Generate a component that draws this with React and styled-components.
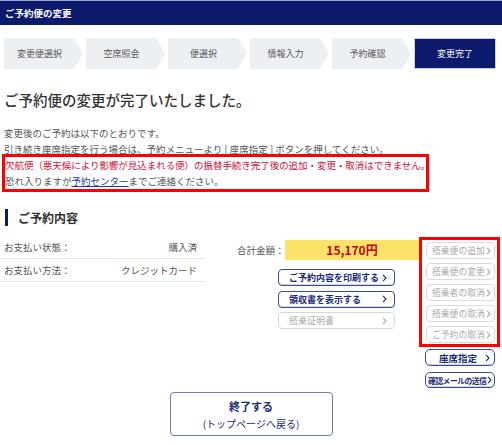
import styled, { createGlobalStyle } from 'styled-components';

const GlobalStyle = createGlobalStyle`
  html, body {
    margin: 0;
    padding: 0;
    background: #fff;
  }
  body {
    font-family: 'Noto Sans CJK JP', 'Noto Sans', sans-serif;
    color: #444;
    width: 502px;
  }
`;

const NAVY = '#0b1a6c';

const steps = ['変更便選択', '空席照会', '便選択', '情報入力', '予約確認', '変更完了'];

const sideButtons = ['搭乗便の追加', '搭乗便の変更', '搭乗者の取消', '搭乗便の取消', 'ご予約の取消'];

export default function App() {
  return (
    <Page>
      <GlobalStyle />
      <Header>ご予約便の変更</Header>

      <StepBar>
        {steps.map((s, i) => (
          <Step key={s} $last={i === steps.length - 1}>
            {s}
          </Step>
        ))}
      </StepBar>

      <Title>ご予約便の変更が完了いたしました。</Title>

      <Notes>
        <p>変更後のご予約は以下のとおりです。</p>
        <p>引き続き座席指定を行う場合は、予約メニューより [ 座席指定 ] ボタンを押してください。</p>
        <Warning>
          <p className="red">
            欠航便（悪天候により影響が見込まれる便）の振替手続き完了後の追加・変更・取消はできません。
          </p>
          <p>
            恐れ入りますが<a href="#center">予約センター</a>までご連絡ください。
          </p>
        </Warning>
      </Notes>

      <SectionTitle>ご予約内容</SectionTitle>

      <Summary>
        <InfoTable>
          <InfoRow>
            <span>お支払い状態：</span>
            <span>購入済</span>
          </InfoRow>
          <InfoRow>
            <span>お支払い方法：</span>
            <span>クレジットカード</span>
          </InfoRow>
        </InfoTable>

        <Middle>
          <TotalRow>
            <TotalLabel>合計金額：</TotalLabel>
            <TotalValue>15,170円</TotalValue>
          </TotalRow>
          <ActionList>
            <ActionButton>ご予約内容を印刷する<Chevron /></ActionButton>
            <ActionButton>領収書を表示する<Chevron /></ActionButton>
            <ActionButton $disabled>搭乗証明書<Chevron /></ActionButton>
          </ActionList>
        </Middle>

        <Side>
          <RedFrame>
            {sideButtons.map((b) => (
              <SideButton key={b}>
                {b}
                <Chevron />
              </SideButton>
            ))}
          </RedFrame>
          <StrongButton>座席指定<Chevron /></StrongButton>
          <StrongButton $small>確認メールの送信<Chevron /></StrongButton>
        </Side>
      </Summary>

      <FinishWrap>
        <FinishButton>
          <strong>終了する</strong>
          <span>(トップページへ戻る)</span>
        </FinishButton>
      </FinishWrap>
    </Page>
  );
}

function Chevron() {
  return (
    <ChevronIcon viewBox="0 0 6 10" aria-hidden="true">
      <path d="M1.2 1.2l3.6 3.8-3.6 3.8" fill="none" stroke="currentColor" strokeWidth="1.4" />
    </ChevronIcon>
  );
}

const Page = styled.div`
  width: 502px;
  padding-bottom: 8px;
`;

const Header = styled.div`
  height: 25px;
  background: ${NAVY};
  border-top: 1px solid #9aa3c8;
  box-sizing: border-box;
  color: #fff;
  font-weight: 700;
  font-size: 9.5px;
  line-height: 24px;
  padding-left: 5px;
`;

const StepBar = styled.div`
  display: flex;
  gap: 2px;
  margin: 13px 0 0 4px;
`;

const Step = styled.div`
  width: ${(p) => (p.$last ? '82px' : '80px')};
  height: 31px;
  box-sizing: border-box;
  display: flex;
  align-items: center;
  justify-content: center;
  font-size: 9px;
  padding-right: ${(p) => (p.$last ? '0' : '9px')};
  background: ${(p) => (p.$last ? NAVY : '#edf0f3')};
  color: ${(p) => (p.$last ? '#fff' : '#555')};
  clip-path: ${(p) =>
    p.$last ? 'none' : 'polygon(0 0, 70px 0, 79px 50%, 70px 100%, 0 100%)'};
  border: ${(p) => (p.$last ? '1px solid #c8cde0' : 'none')};
`;

const Title = styled.h1`
  margin: 21px 0 0 4px;
  font-size: 14.5px;
  font-weight: 500;
  color: #333;
  line-height: 20px;
`;

const Notes = styled.div`
  margin-top: 15px;
  font-size: 9.5px;
  line-height: 16px;
  color: #555;

  p {
    margin: 0 0 0 4px;
    white-space: nowrap;
  }
`;

const Warning = styled.div`
  width: 427px;
  margin: -3px 0 0 2px;
  border: 3px solid #f00;
  box-sizing: border-box;

  p {
    margin-left: 0;
  }

  .red {
    color: #d0103a;
    letter-spacing: -0.04px;
  }

  a {
    color: #1b3b9b;
    text-decoration: underline;
  }
`;

const SectionTitle = styled.h2`
  margin: 17px 0 0 5px;
  padding-left: 10px;
  border-left: 3px solid ${NAVY};
  font-size: 12px;
  font-weight: 700;
  color: #333;
  line-height: 17px;
`;

const Summary = styled.div`
  display: flex;
  margin-top: 10px;
  align-items: flex-start;
`;

const InfoTable = styled.div`
  width: 205px;
  font-size: 9.5px;
  color: #555;
`;

const InfoRow = styled.div`
  display: flex;
  justify-content: space-between;
  height: 22px;
  align-items: center;
  padding: 0 8px 0 4px;
  border-bottom: 1px solid #dce6f2;
`;

const Middle = styled.div`
  width: 182px;
  margin-left: 32px;
  padding-top: 4px;
`;

const TotalRow = styled.div`
  display: flex;
  align-items: center;
`;

const TotalLabel = styled.span`
  width: 48px;
  font-size: 9.5px;
  color: #555;
`;

const TotalValue = styled.span`
  flex: 1;
  height: 20px;
  background: #fde26a;
  color: #c8001a;
  font-weight: 700;
  font-size: 12px;
  line-height: 20px;
  text-align: center;
`;

const ActionList = styled.div`
  display: flex;
  flex-direction: column;
  gap: 4.5px;
  margin: 9px 0 0 41px;
  width: 117px;
`;

const ActionButton = styled.div`
  height: 17px;
  box-sizing: border-box;
  border: 1px solid ${(p) => (p.$disabled ? '#d6d6d6' : '#3b4a96')};
  border-radius: 4px;
  display: flex;
  align-items: center;
  justify-content: space-between;
  padding: 0 7px 0 10px;
  font-size: 9px;
  font-weight: ${(p) => (p.$disabled ? 400 : 700)};
  color: ${(p) => (p.$disabled ? '#aaa' : '#1b2a7a')};
  box-shadow: ${(p) => (p.$disabled ? 'none' : 'inset 0 -1px 0 #cfd5ea')};
`;

const Side = styled.div`
  width: 81px;
  display: flex;
  flex-direction: column;
  align-items: flex-end;
`;

const RedFrame = styled.div`
  align-self: stretch;
  border: 3px solid #f00;
  box-sizing: border-box;
  padding: 2px 2px 1px 4px;
  display: flex;
  flex-direction: column;
  gap: 4px;
  margin-top: 1px;
`;

const SideButton = styled.div`
  height: 17px;
  box-sizing: border-box;
  border-radius: 4px;
  display: flex;
  align-items: center;
  justify-content: space-between;
  white-space: nowrap;
  font-size: 8.8px;
  border: 1px solid #dcdcdc;
  color: #aaa;
  padding: 0 3px 0 5px;
`;

const StrongButton = styled.div`
  width: 70px;
  height: ${(p) => (p.$small ? '16px' : '17px')};
  margin: ${(p) => (p.$small ? '6px 5px 0 0' : '2px 5px 0 0')};
  box-sizing: border-box;
  border-radius: 5px;
  display: flex;
  align-items: center;
  justify-content: space-between;
  white-space: nowrap;
  font-size: ${(p) => (p.$small ? '7.8px' : '9.5px')};
  font-weight: 700;
  letter-spacing: ${(p) => (p.$small ? '-0.5px' : '0')};
  border: 1px solid #3b4a96;
  color: #1b2a7a;
  padding: ${(p) => (p.$small ? '0 2px 0 2px' : '0 4px 0 13px')};
  box-shadow: inset 0 -1px 0 #cfd5ea;
`;

const ChevronIcon = styled.svg`
  width: 5px;
  height: 8px;
  flex-shrink: 0;
`;

const FinishWrap = styled.div`
  display: flex;
  justify-content: center;
  margin-top: 4px;
`;

const FinishButton = styled.div`
  width: 163px;
  height: 44px;
  box-sizing: border-box;
  border: 1px solid #6f7cb8;
  border-radius: 4px;
  display: flex;
  flex-direction: column;
  align-items: center;
  justify-content: center;
  gap: 2px;
  color: #1b2a6e;

  strong {
    font-size: 11px;
    font-weight: 700;
  }

  span {
    font-size: 10px;
  }
`;
